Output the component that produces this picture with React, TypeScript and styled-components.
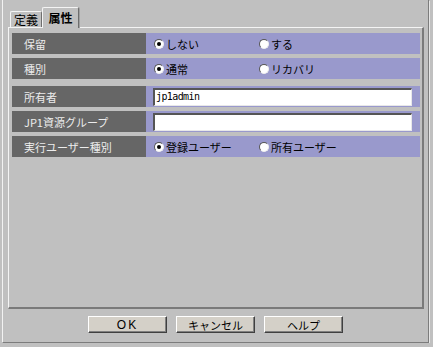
import React from "react";
import styled, { createGlobalStyle } from "styled-components";

const Global = createGlobalStyle`
  html, body { margin: 0; padding: 0; background: #c0c0c0; }
  body { font-family: "Noto Sans CJK JP", "Liberation Sans", sans-serif; }
  * { box-sizing: border-box; }
`;

const Window = styled.div`
  margin-left: 2px;
  width: 427px;
  height: 343px;
  background: #c0c0c0;
  border-left: 1px solid #f2f2f2;
  border-right: 1px solid #7c7c7c;
  border-bottom: 1px solid #7c7c7c;
  box-shadow: 1px 1px 0 #e6e6e6;
  padding: 0 3px 0 5px;
  display: flex;
  flex-direction: column;
`;

const TabBar = styled.div`
  height: 27px;
  display: flex;
  align-items: flex-end;
  padding-left: 2px;
`;

const Tab = styled.div<{ $active?: boolean }>`
  position: relative;
  height: ${(p) => (p.$active ? 21 : 16)}px;
  width: ${(p) => (p.$active ? 37 : 32)}px;
  margin-bottom: ${(p) => (p.$active ? -1 : 0)}px;
  z-index: ${(p) => (p.$active ? 2 : 1)};
  background: #c0c0c0;
  border-top: 1px solid #f4f4f4;
  border-left: 1px solid #f4f4f4;
  border-right: 1px solid #6e6e6e;
  box-shadow: ${(p) => (p.$active ? "1px 0 0 #a0a0a0" : "none")};
  border-radius: 2px 2px 0 0;
  display: flex;
  align-items: ${(p) => (p.$active ? "flex-start" : "center")};
  justify-content: center;
  padding-top: ${(p) => (p.$active ? 3 : 0)}px;
  font-size: 12px;
  line-height: 14px;
  font-weight: ${(p) => (p.$active ? 700 : 400)};
  color: #000;
`;

const Panel = styled.div`
  width: 416px;
  height: 282px;
  border-top: 1px solid #f4f4f4;
  border-left: 1px solid #f4f4f4;
  border-right: 2px solid #7a7a7a;
  border-bottom: 2px solid #7a7a7a;
  padding: 5px 2px 0 3px;
  display: flex;
  flex-direction: column;
  gap: 7px;
`;

const Group = styled.div`
  display: flex;
  flex-direction: column;
  gap: 4px;
`;

const Row = styled.div`
  height: 21px;
  display: grid;
  grid-template-columns: 134px 1fr;
`;

const Label = styled.div`
  background: #666666;
  color: #ececec;
  font-size: 11px;
  padding-left: 12px;
  display: flex;
  align-items: center;
  white-space: nowrap;
`;

const Value = styled.div`
  background: #9999cc;
  display: flex;
  align-items: center;
  padding-left: 8px;
`;

const Option = styled.label`
  width: 105px;
  display: flex;
  align-items: center;
  gap: 2px;
  font-size: 11px;
  color: #000;
  white-space: nowrap;
`;

const Circle = styled.span<{ $on?: boolean }>`
  width: 10px;
  height: 10px;
  border-radius: 50%;
  background: #fff;
  border: 1px solid;
  border-color: #555 #eee #eee #555;
  display: flex;
  align-items: center;
  justify-content: center;
  &::after {
    content: "";
    width: 4px;
    height: 4px;
    border-radius: 50%;
    background: ${(p) => (p.$on ? "#000" : "transparent")};
  }
`;

const TextInput = styled.div`
  margin-left: -1px;
  width: 259px;
  height: 18px;
  background: #fff;
  border-top: 2px solid #555;
  border-left: 2px solid #555;
  border-right: 1px solid #e8e8e8;
  border-bottom: 1px solid #e8e8e8;
  font-family: "DejaVu Sans Mono", monospace;
  font-size: 10px;
  letter-spacing: -0.6px;
  line-height: 14px;
  padding-left: 1px;
  color: #000;
`;

const Footer = styled.div`
  margin-top: 7px;
  display: flex;
  justify-content: center;
  gap: 9px;
  padding-right: 2px;
`;

const Button = styled.button<{ $spaced?: boolean }>`
  width: 79px;
  height: 17px;
  padding: 0;
  background: #d4d0c8;
  border-top: 1px solid #fff;
  border-left: 1px solid #fff;
  border-right: 1px solid #404040;
  border-bottom: 1px solid #404040;
  box-shadow: inset -1px -1px 0 #808080;
  font-family: ${(p) => (p.$spaced ? '"Liberation Sans", sans-serif' : '"Noto Sans CJK JP", sans-serif')};
  font-size: ${(p) => (p.$spaced ? 12 : 11)}px;
  letter-spacing: ${(p) => (p.$spaced ? 2 : 0)}px;
  line-height: 14px;
  color: #000;
`;

type Opt = { label: string; on?: boolean };

function RadioRow({ label, options }: { label: string; options: Opt[] }) {
  return (
    <Row>
      <Label>{label}</Label>
      <Value>
        {options.map((o) => (
          <Option key={o.label}>
            <Circle $on={o.on} />
            {o.label}
          </Option>
        ))}
      </Value>
    </Row>
  );
}

function InputRow({ label, value }: { label: string; value: string }) {
  return (
    <Row>
      <Label>{label}</Label>
      <Value>
        <TextInput>{value}</TextInput>
      </Value>
    </Row>
  );
}

export default function App() {
  return (
    <>
      <Global />
      <Window>
        <TabBar>
          <Tab>定義</Tab>
          <Tab $active>属性</Tab>
        </TabBar>
        <Panel>
          <Group>
            <RadioRow label="保留" options={[{ label: "しない", on: true }, { label: "する" }]} />
            <RadioRow label="種別" options={[{ label: "通常", on: true }, { label: "リカバリ" }]} />
          </Group>
          <Group>
            <InputRow label="所有者" value="jp1admin" />
            <InputRow label="JP1資源グループ" value="" />
            <RadioRow
              label="実行ユーザー種別"
              options={[{ label: "登録ユーザー", on: true }, { label: "所有ユーザー" }]}
            />
          </Group>
        </Panel>
        <Footer>
          <Button $spaced>OK</Button>
          <Button>キャンセル</Button>
          <Button>ヘルプ</Button>
        </Footer>
      </Window>
    </>
  );
}
